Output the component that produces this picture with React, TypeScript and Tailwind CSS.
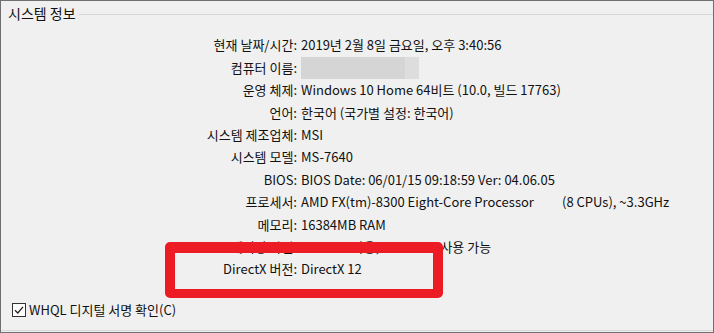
import React from 'react'

const font = { fontFamily: '"Noto Sans CJK KR", "Noto Sans", sans-serif' }

const rows: { label: string; value: React.ReactNode }[] = [
  { label: '현재 날짜/시간:', value: '2019년 2월 8일 금요일, 오후 3:40:56' },
  {
    label: '컴퓨터 이름:',
    value: (
      <span className="flex h-[22px] w-[118px]">
        <span className="h-full w-[104px] bg-[#d5d5d5]" />
        <span className="h-full w-[14px] bg-[#dddddd]" />
      </span>
    ),
  },
  { label: '운영 체제:', value: 'Windows 10 Home 64비트 (10.0, 빌드 17763)' },
  { label: '언어:', value: '한국어 (국가별 설정: 한국어)' },
  { label: '시스템 제조업체:', value: 'MSI' },
  { label: '시스템 모델:', value: 'MS-7640' },
  { label: 'BIOS:', value: 'BIOS Date: 06/01/15 09:18:59 Ver: 04.06.05' },
  {
    label: '프로세서:',
    value: (
      <span className="flex">
        <span className="w-[261px]">AMD FX(tm)-8300 Eight-Core Processor</span>
        <span>(8 CPUs), ~3.3GHz</span>
      </span>
    ),
  },
  { label: '메모리:', value: '16384MB RAM' },
  { label: '페이징 파일:', value: '8011MB 사용, 10739MB 사용 가능' },
  { label: 'DirectX 버전:', value: 'DirectX 12' },
]

export default function App() {
  return (
    <div
      className="relative h-[333px] w-[714px] overflow-hidden border border-[#707070] bg-[#f0f0f0] text-[13px] text-[#111]"
      style={font}
    >
      <div className="flex h-[33px] items-start">
        <span className="ml-[7px] mt-[2px] text-[14px] leading-[20px]">시스템 정보</span>
        <div className="ml-[3px] mt-[13px] h-px flex-1 bg-[#d5d5d5]" />
      </div>

      <div className="grid grid-cols-[296px_1fr]">
        {rows.map((r) => (
          <React.Fragment key={r.label}>
            <div className="flex h-[22.4px] items-center justify-end whitespace-nowrap">{r.label}</div>
            <div className="flex h-[22.4px] items-center whitespace-nowrap pl-[4px]">{r.value}</div>
          </React.Fragment>
        ))}
      </div>

      <div className="mt-[20px] flex items-center pl-[11px]">
        <span className="flex h-[14px] w-[14px] items-center justify-center border border-[#333] bg-white">
          <svg width="12" height="12" viewBox="0 0 12 12" fill="none">
            <path d="M2 6.2 L4.8 9 L10 2.8" stroke="#222" strokeWidth="1.3" />
          </svg>
        </span>
        <span className="ml-[3px]">WHQL 디지털 서명 확인(C)</span>
      </div>

      <div className="absolute bottom-[1px] left-0 right-0 h-px bg-[#d8d8d8]" />

      <div className="absolute left-[164px] top-[241px] h-[56px] w-[278px] rounded-[5px] border-[10px] border-b-[9px] border-t-[11px] border-[#ed1c24]" />
    </div>
  )
}
